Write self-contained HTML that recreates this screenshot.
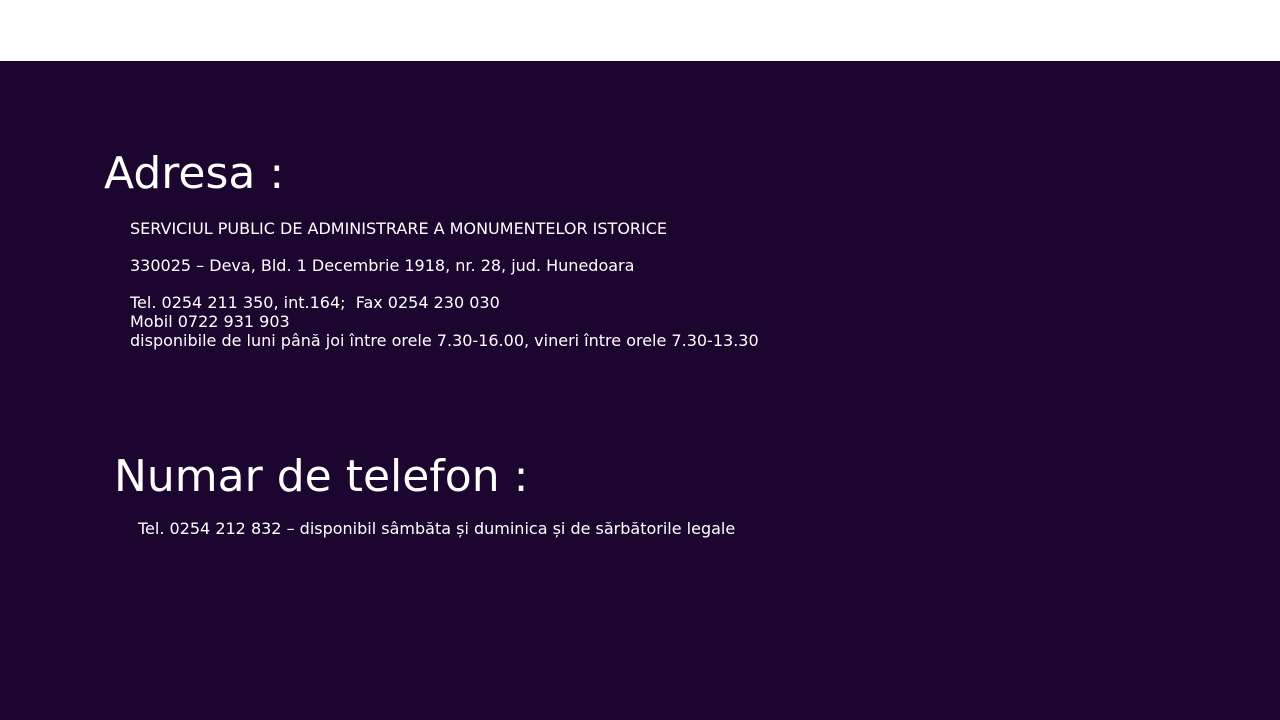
<!DOCTYPE html>
<html><head><meta charset="utf-8"><style>
html,body{margin:0;padding:0;width:1280px;height:720px;overflow:hidden;background:#fff;font-family:"DejaVu Sans","Liberation Sans",sans-serif;}
.main{position:absolute;top:61px;left:0;width:1280px;height:659px;background:#1c052e;color:#fff;}
.h{position:absolute;font-size:44px;line-height:44px;white-space:nowrap;}
.t{position:absolute;font-size:16px;line-height:18.6px;white-space:nowrap;}
</style></head><body>
<div class="main">
<div class="h" style="left:104px;top:91px">Adresa :</div>
<div class="t" style="left:130px;top:159px">SERVICIUL PUBLIC DE ADMINISTRARE A MONUMENTELOR ISTORICE<br><br>330025 – Deva, Bld. 1 Decembrie 1918, nr. 28, jud. Hunedoara<br><br>Tel. 0254 211 350, int.164;&nbsp; Fax 0254 230 030<br>Mobil 0722 931 903<br>disponibile de luni până joi între orele 7.30-16.00, vineri între orele 7.30-13.30</div>
<div class="h" style="left:114px;top:394px">Numar de telefon :</div>
<div class="t" style="left:138px;top:459px">Tel. 0254 212 832 – disponibil sâmbăta și duminica și de sărbătorile legale</div>
</div>
</body></html>
